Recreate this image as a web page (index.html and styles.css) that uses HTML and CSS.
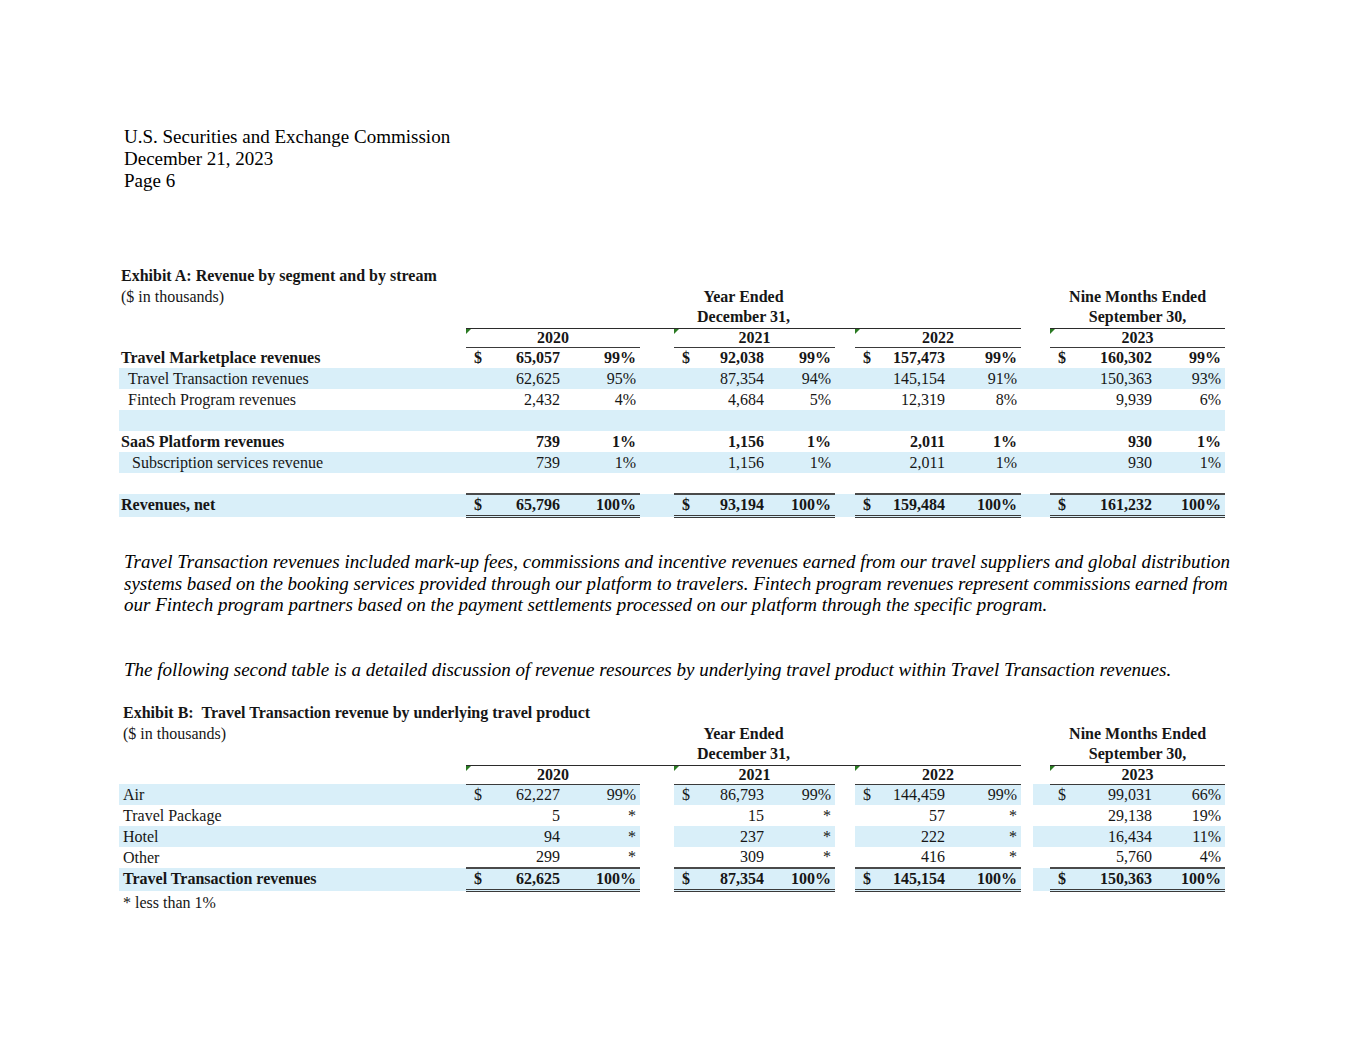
FILE: index.html
```html
<!DOCTYPE html>
<html lang="en">
<head>
<meta charset="utf-8">
<title>Page 6</title>
<link rel="stylesheet" href="styles.css">
</head>
<body>
<div class="page">
  <div class="letterhead">U.S. Securities and Exchange Commission<br>December 21, 2023<br>Page 6</div>

  <section class="exhibit ex-a">
    <div class="ex-title">Exhibit A: Revenue by segment and by stream</div>
    <table class="fin">
      <colgroup>
        <col class="c-lab"><col class="c-d1"><col class="c-n1"><col class="c-p1"><col class="c-g1">
        <col class="c-d2"><col class="c-n2"><col class="c-p2"><col class="c-g2">
        <col class="c-d3"><col class="c-n3"><col class="c-p3"><col class="c-g3a"><col class="c-g3b">
        <col class="c-d4"><col class="c-n4"><col class="c-p4">
      </colgroup>
      <tr>
        <td class="lab unit">($ in thousands)</td>
        <td class="hd" colspan="11">Year Ended</td>
        <td></td><td></td>
        <td class="hd" colspan="3">Nine Months Ended</td>
      </tr>
      <tr>
        <td class="lab"></td>
        <td class="hd rule" colspan="11">December 31,</td>
        <td></td><td></td>
        <td class="hd rule" colspan="3">September 30,</td>
      </tr>
      <tr class="yrs">
        <td class="lab"></td>
        <td class="yr" colspan="3">2020</td><td></td>
        <td class="yr" colspan="3">2021</td><td></td>
        <td class="yr" colspan="3">2022</td><td></td><td></td>
        <td class="yr" colspan="3">2023</td>
      </tr>
      <tr class="bold">
        <td class="lab">Travel Marketplace revenues</td>
        <td class="d">$</td><td class="n">65,057</td><td class="p">99%</td><td></td>
        <td class="d">$</td><td class="n">92,038</td><td class="p">99%</td><td></td>
        <td class="d">$</td><td class="n">157,473</td><td class="p">99%</td><td></td><td></td>
        <td class="d">$</td><td class="n">160,302</td><td class="p">99%</td>
      </tr>
      <tr class="blue">
        <td class="lab ind">Travel Transaction revenues</td>
        <td class="d"></td><td class="n">62,625</td><td class="p">95%</td><td></td>
        <td class="d"></td><td class="n">87,354</td><td class="p">94%</td><td></td>
        <td class="d"></td><td class="n">145,154</td><td class="p">91%</td><td></td><td></td>
        <td class="d"></td><td class="n">150,363</td><td class="p">93%</td>
      </tr>
      <tr>
        <td class="lab ind">Fintech Program revenues</td>
        <td class="d"></td><td class="n">2,432</td><td class="p">4%</td><td></td>
        <td class="d"></td><td class="n">4,684</td><td class="p">5%</td><td></td>
        <td class="d"></td><td class="n">12,319</td><td class="p">8%</td><td></td><td></td>
        <td class="d"></td><td class="n">9,939</td><td class="p">6%</td>
      </tr>
      <tr class="blue">
        <td class="lab"></td>
        <td></td><td></td><td></td><td></td>
        <td></td><td></td><td></td><td></td>
        <td></td><td></td><td></td><td></td><td></td>
        <td></td><td></td><td></td>
      </tr>
      <tr class="bold">
        <td class="lab">SaaS Platform revenues</td>
        <td class="d"></td><td class="n">739</td><td class="p">1%</td><td></td>
        <td class="d"></td><td class="n">1,156</td><td class="p">1%</td><td></td>
        <td class="d"></td><td class="n">2,011</td><td class="p">1%</td><td></td><td></td>
        <td class="d"></td><td class="n">930</td><td class="p">1%</td>
      </tr>
      <tr class="blue">
        <td class="lab ind2">Subscription services revenue</td>
        <td class="d"></td><td class="n">739</td><td class="p">1%</td><td></td>
        <td class="d"></td><td class="n">1,156</td><td class="p">1%</td><td></td>
        <td class="d"></td><td class="n">2,011</td><td class="p">1%</td><td></td><td></td>
        <td class="d"></td><td class="n">930</td><td class="p">1%</td>
      </tr>
      <tr>
        <td class="lab"></td>
        <td></td><td></td><td></td><td></td>
        <td></td><td></td><td></td><td></td>
        <td></td><td></td><td></td><td></td><td></td>
        <td></td><td></td><td></td>
      </tr>
      <tr class="blue bold total">
        <td class="lab">Revenues, net</td>
        <td class="d t">$</td><td class="n t">65,796</td><td class="p t">100%</td><td></td>
        <td class="d t">$</td><td class="n t">93,194</td><td class="p t">100%</td><td></td>
        <td class="d t">$</td><td class="n t">159,484</td><td class="p t">100%</td><td></td><td></td>
        <td class="d t">$</td><td class="n t">161,232</td><td class="p t">100%</td>
      </tr>
    </table>
  </section>

  <p class="note first">Travel Transaction revenues included mark-up fees, commissions and incentive revenues earned from our travel suppliers and global distribution<br>systems based on the booking services provided through our platform to travelers. Fintech program revenues represent commissions earned from<br>our Fintech program partners based on the payment settlements processed on our platform through the specific program.</p>

  <p class="note second">The following second table is a detailed discussion of revenue resources by underlying travel product within Travel Transaction revenues.</p>

  <section class="exhibit ex-b">
    <div class="ex-title">Exhibit B:&nbsp; Travel Transaction revenue by underlying travel product</div>
    <table class="fin split">
      <colgroup>
        <col class="c-lab"><col class="c-d1"><col class="c-n1"><col class="c-p1"><col class="c-g1">
        <col class="c-d2"><col class="c-n2"><col class="c-p2"><col class="c-g2">
        <col class="c-d3"><col class="c-n3"><col class="c-p3"><col class="c-g3a"><col class="c-g3b">
        <col class="c-d4"><col class="c-n4"><col class="c-p4">
      </colgroup>
      <tr>
        <td class="lab unit">($ in thousands)</td>
        <td class="hd" colspan="11">Year Ended</td>
        <td></td><td></td>
        <td class="hd" colspan="3">Nine Months Ended</td>
      </tr>
      <tr>
        <td class="lab"></td>
        <td class="hd rule" colspan="11">December 31,</td>
        <td></td><td></td>
        <td class="hd rule" colspan="3">September 30,</td>
      </tr>
      <tr class="yrs">
        <td class="lab"></td>
        <td class="yr" colspan="3">2020</td><td></td>
        <td class="yr" colspan="3">2021</td><td></td>
        <td class="yr" colspan="3">2022</td><td></td><td></td>
        <td class="yr" colspan="3">2023</td>
      </tr>
      <tr class="blue">
        <td class="lab">Air</td>
        <td class="d">$</td><td class="n">62,227</td><td class="p">99%</td><td class="gap"></td>
        <td class="d">$</td><td class="n">86,793</td><td class="p">99%</td><td class="gap"></td>
        <td class="d">$</td><td class="n">144,459</td><td class="p">99%</td><td class="gap"></td><td></td>
        <td class="d">$</td><td class="n">99,031</td><td class="p">66%</td>
      </tr>
      <tr>
        <td class="lab">Travel Package</td>
        <td class="d"></td><td class="n">5</td><td class="p">*</td><td></td>
        <td class="d"></td><td class="n">15</td><td class="p">*</td><td></td>
        <td class="d"></td><td class="n">57</td><td class="p">*</td><td></td><td></td>
        <td class="d"></td><td class="n">29,138</td><td class="p">19%</td>
      </tr>
      <tr class="blue">
        <td class="lab">Hotel</td>
        <td class="d"></td><td class="n">94</td><td class="p">*</td><td class="gap"></td>
        <td class="d"></td><td class="n">237</td><td class="p">*</td><td class="gap"></td>
        <td class="d"></td><td class="n">222</td><td class="p">*</td><td class="gap"></td><td></td>
        <td class="d"></td><td class="n">16,434</td><td class="p">11%</td>
      </tr>
      <tr>
        <td class="lab">Other</td>
        <td class="d"></td><td class="n">299</td><td class="p">*</td><td></td>
        <td class="d"></td><td class="n">309</td><td class="p">*</td><td></td>
        <td class="d"></td><td class="n">416</td><td class="p">*</td><td></td><td></td>
        <td class="d"></td><td class="n">5,760</td><td class="p">4%</td>
      </tr>
      <tr class="blue bold total">
        <td class="lab">Travel Transaction revenues</td>
        <td class="d t">$</td><td class="n t">62,625</td><td class="p t">100%</td><td class="gap"></td>
        <td class="d t">$</td><td class="n t">87,354</td><td class="p t">100%</td><td class="gap"></td>
        <td class="d t">$</td><td class="n t">145,154</td><td class="p t">100%</td><td class="gap"></td><td></td>
        <td class="d t">$</td><td class="n t">150,363</td><td class="p t">100%</td>
      </tr>
    </table>
    <div class="footnote">* less than 1%</div>
  </section>
</div>
</body>
</html>
```

FILE: styles.css
```css
html, body {
  margin: 0;
  padding: 0;
  background: #ffffff;
}

body {
  color: #000;
  font-family: "Liberation Serif", "Times New Roman", serif;
}

.page {
  padding: 126px 0 60px 119px;
}

.letterhead {
  padding-left: 5px;
  font-size: 19px;
  line-height: 22px;
}

.ex-a {
  margin-top: 73px;
}

.ex-b {
  margin-top: 22px;
}

.ex-title {
  font-size: 16px;
  line-height: 21px;
  height: 21px;
  font-weight: bold;
  color: #161616;
  padding-left: 2px;
}

.ex-b .ex-title {
  padding-left: 4px;
}

/* financial tables */
.fin {
  border-collapse: collapse;
  table-layout: fixed;
  width: 1106px;
  font-size: 16px;
  color: #161616;
}

.fin td {
  box-sizing: border-box;
  height: 21px;
  padding: 0;
  line-height: 20px;
  white-space: nowrap;
  vertical-align: middle;
}

.fin tr.yrs td {
  height: 19px;
  line-height: 18px;
}

.c-lab { width: 347px; }
.c-d1 { width: 26px; }
.c-n1 { width: 71px; }
.c-p1 { width: 77px; }
.c-g1 { width: 34px; }
.c-d2 { width: 24px; }
.c-n2 { width: 69px; }
.c-p2 { width: 68px; }
.c-g2 { width: 20px; }
.c-d3 { width: 24px; }
.c-n3 { width: 69px; }
.c-p3 { width: 73px; }
.c-g3a { width: 12px; }
.c-g3b { width: 17px; }
.c-d4 { width: 24px; }
.c-n4 { width: 81px; }
.c-p4 { width: 70px; }

.fin .lab { padding-left: 2px; }
.fin .lab.ind { padding-left: 9px; }
.fin .lab.ind2 { padding-left: 13px; }
.ex-b .fin .lab { padding-left: 4px; }

.fin .d { padding-left: 8px; text-align: left; }
.fin .n { padding-right: 3px; text-align: right; }
.fin .p { padding-right: 4px; text-align: right; }

.fin .hd {
  text-align: center;
  font-weight: bold;
}

.fin .rule {
  border-bottom: 1px solid #2b2b2b;
}

.fin .yr {
  position: relative;
  text-align: center;
  font-weight: bold;
  border-bottom: 1px solid #3a3a3a;
}

.fin .yr::before {
  content: "";
  position: absolute;
  left: 0;
  top: 0;
  border-top: 5px solid #2a7a22;
  border-right: 5px solid transparent;
}

.fin tr.bold td {
  font-weight: bold;
}

.fin tr.blue td {
  background: #d9eff9;
}

.split tr.blue td.gap {
  background: #ffffff;
}

.fin tr.total td {
  height: 20px;
}

.fin tr.total td.t {
  border-top: 2px solid #4a4a4a;
  border-bottom: 3px double #3a3a3a;
}

/* narrative */
.note {
  margin: 0;
  padding-left: 5px;
  font-size: 19px;
  line-height: 21.5px;
  font-style: italic;
  white-space: nowrap;
}

.note.first {
  margin-top: 33px;
}

.note.second {
  margin-top: 43px;
}

.footnote {
  padding-left: 4px;
  font-size: 16px;
  line-height: 21px;
  color: #161616;
}
```
